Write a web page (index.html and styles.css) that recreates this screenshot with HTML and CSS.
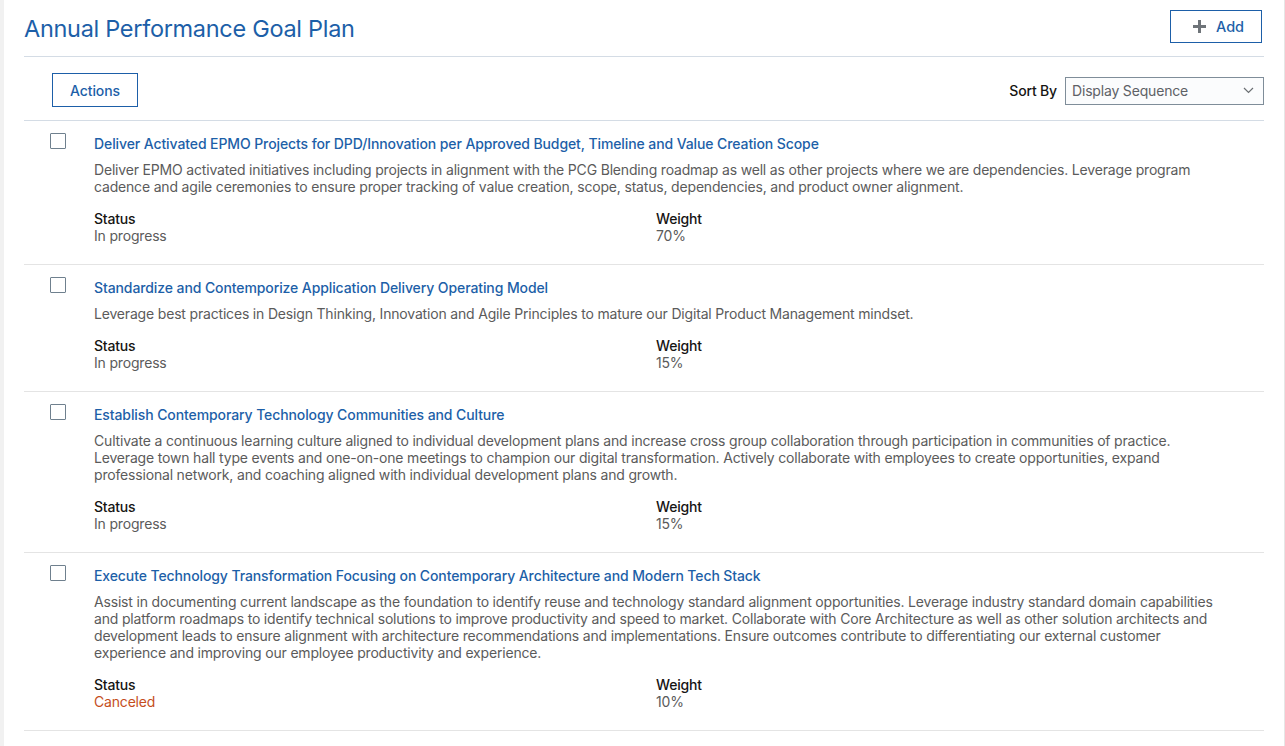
FILE: index.html
```html
<!DOCTYPE html>
<html lang="en">
<head>
<meta charset="utf-8">
<title>Annual Performance Goal Plan</title>
<link rel="stylesheet" href="styles.css">
</head>
<body>
<div class="frame">
  <main class="page">
    <header class="head">
      <h1 class="title">Annual Performance Goal Plan</h1>
      <button class="btn btn-add" type="button">
        <svg class="plus" width="15" height="15" viewBox="0 0 15 15" aria-hidden="true"><path d="M7.5 1v13M1 7.5h13" stroke="#6f7479" stroke-width="3" fill="none"/></svg>
        <span>Add</span>
      </button>
    </header>
    <div class="toolbar">
      <button class="btn btn-actions" type="button">Actions</button>
      <div class="sort">
        <span class="sort-label">Sort By</span>
        <div class="select">
          <span>Display Sequence</span>
          <svg width="11" height="7" viewBox="0 0 11 7" aria-hidden="true"><path d="M1 1l4.5 4.5L10 1" stroke="#6b6f73" stroke-width="1.2" fill="none"/></svg>
        </div>
      </div>
    </div>
    <ul class="goals">
      <li class="goal">
        <span class="check"></span>
        <div class="goal-body">
          <a class="goal-title" href="#">Deliver Activated EPMO Projects for DPD/Innovation per Approved Budget, Timeline and Value Creation Scope</a>
          <p class="desc">Deliver EPMO activated initiatives including projects in alignment with the PCG Blending roadmap as well as other projects where we are dependencies. Leverage program cadence and agile ceremonies to ensure proper tracking of value creation, scope, status, dependencies, and product owner alignment.</p>
          <div class="meta">
            <div><div class="label">Status</div><div class="value">In progress</div></div>
            <div><div class="label">Weight</div><div class="value">70%</div></div>
          </div>
        </div>
      </li>
      <li class="goal">
        <span class="check"></span>
        <div class="goal-body">
          <a class="goal-title" href="#">Standardize and Contemporize Application Delivery Operating Model</a>
          <p class="desc">Leverage best practices in Design Thinking, Innovation and Agile Principles to mature our Digital Product Management mindset.</p>
          <div class="meta">
            <div><div class="label">Status</div><div class="value">In progress</div></div>
            <div><div class="label">Weight</div><div class="value">15%</div></div>
          </div>
        </div>
      </li>
      <li class="goal">
        <span class="check"></span>
        <div class="goal-body">
          <a class="goal-title" href="#">Establish Contemporary Technology Communities and Culture</a>
          <p class="desc">Cultivate a continuous learning culture aligned to individual development plans and increase cross group collaboration through participation in communities of practice. Leverage town hall type events and one-on-one meetings to champion our digital transformation. Actively collaborate with employees to create opportunities, expand professional network, and coaching aligned with individual development plans and growth.</p>
          <div class="meta">
            <div><div class="label">Status</div><div class="value">In progress</div></div>
            <div><div class="label">Weight</div><div class="value">15%</div></div>
          </div>
        </div>
      </li>
      <li class="goal">
        <span class="check"></span>
        <div class="goal-body">
          <a class="goal-title" href="#">Execute Technology Transformation Focusing on Contemporary Architecture and Modern Tech Stack</a>
          <p class="desc">Assist in documenting current landscape as the foundation to identify reuse and technology standard alignment opportunities. Leverage industry standard domain capabilities and platform roadmaps to identify technical solutions to improve productivity and speed to market. Collaborate with Core Architecture as well as other solution architects and development leads to ensure alignment with architecture recommendations and implementations. Ensure outcomes contribute to differentiating our external customer experience and improving our employee productivity and experience.</p>
          <div class="meta">
            <div><div class="label">Status</div><div class="value canceled">Canceled</div></div>
            <div><div class="label">Weight</div><div class="value">10%</div></div>
          </div>
        </div>
      </li>
    </ul>
  </main>
</div>
</body>
</html>
```

FILE: styles.css
```css
* { box-sizing: border-box; }
html, body { margin: 0; padding: 0; }
body {
  font-family: Inter, "Noto Sans", "Liberation Sans", sans-serif;
  font-size: 14px;
  color: #161513;
  background: #fff;
  letter-spacing: -0.18px;
}
.frame {
  min-height: 746px;
  border-left: 4px solid #f1f1f1;
  border-right: 1px solid #e6e6e6;
  background: #fff;
}
.page {
  padding: 0 20px 0 20px;
}
.head {
  display: flex;
  align-items: flex-start;
  justify-content: space-between;
  height: 57px;
  border-bottom: 1px solid #d4dce5;
}
.title {
  margin: 14px 0 0 0;
  font-size: 23.5px;
  font-weight: 400;
  line-height: 30px;
  color: #1d5fa8;
  letter-spacing: -0.3px;
}
.btn {
  font-family: inherit;
  background: #fff;
  border: 1px solid #1d5fa8;
  color: #1d5fa8;
  font-size: 14px;
  font-weight: 500;
  letter-spacing: -0.1px;
  cursor: pointer;
}
.btn-add {
  margin: 10px 2px 0 0;
  width: 92px;
  height: 33px;
  display: flex;
  align-items: center;
  justify-content: center;
  gap: 9px;
  padding: 0 0 0 4px;
}
.btn-add span { font-size: 14.5px; }
.toolbar {
  display: flex;
  align-items: center;
  justify-content: space-between;
  height: 64px;
  border-bottom: 1px solid #d4dce5;
  padding: 0 0 0 28px;
}
.btn-actions {
  width: 86px;
  height: 34px;
  padding: 0;
  margin-top: 3px;
}
.sort {
  display: flex;
  align-items: center;
  gap: 8px;
  margin-top: 4px;
}
.sort-label {
  font-size: 14px;
  font-weight: 500;
  color: #161513;
}
.select {
  width: 199px;
  height: 28px;
  border: 1px solid #7f8d99;
  background: #fbfcfd;
  display: flex;
  align-items: center;
  justify-content: space-between;
  padding: 0 9px 0 6px;
  color: #5e6166;
  font-size: 14px;
}
.goals {
  list-style: none;
  margin: 0;
  padding: 0;
}
.goal {
  display: flex;
  border-bottom: 1px solid #e4e4e4;
  padding: 14px 30px 20px 26px;
}
.check {
  flex: none;
  width: 16px;
  height: 16px;
  border: 1px solid #6f808e;
  border-radius: 1px;
  margin-top: -2px;
  background: #fff;
}
.goal-body {
  margin-left: 28px;
  flex: 1;
}
.goal-title {
  display: block;
  color: #1d5fa8;
  text-decoration: none;
  font-weight: 500;
  line-height: 17px;
  font-size: 14px;
  letter-spacing: -0.1px;
}
.desc {
  margin: 9px 0 0 0;
  color: #5b5b5b;
  line-height: 17px;
  font-size: 14px;
}
.meta {
  display: grid;
  grid-template-columns: 562px 1fr;
  margin-top: 15px;
  line-height: 17px;
}
.label {
  color: #161513;
  font-weight: 500;
}
.value { color: #5b5b5b; }
.value.canceled { color: #c54e1c; }
```
